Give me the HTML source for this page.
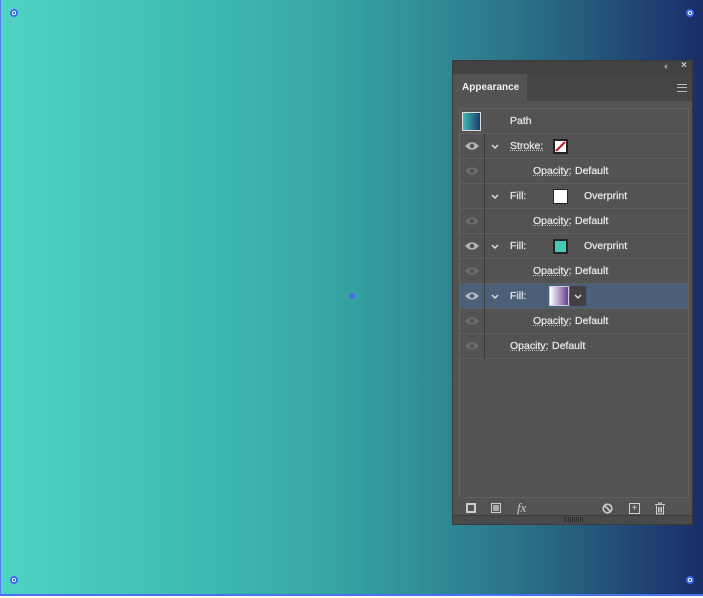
<!DOCTYPE html>
<html><head><style>
*{margin:0;padding:0;box-sizing:border-box}
body{width:703px;height:598px;overflow:hidden;background:#fff;position:relative;font-family:"Liberation Sans",sans-serif}
#bg{position:absolute;left:0;top:0;width:703px;height:596px;background:linear-gradient(90deg,#4fd3c5 0%,#40bdb4 25%,#37a8a6 45%,#32929a 58%,#2c7a8c 70%,#275e7e 82%,#1f4272 92%,#1a2d66 100%);border-left:1px solid #5a7cf0;border-bottom:2px solid #4a72e8}
.h{position:absolute;width:8px;height:8px;border-radius:50%;background:#fff;border:2px solid #3c6cf0}
.h:after{content:"";position:absolute;left:1px;top:1px;width:2px;height:2px;background:#3c6cf0}
#p{position:absolute;left:452px;top:60px;width:241px;height:465px;background:#535353;border:1px solid #3a3a3a}
#top{position:absolute;left:0;top:0;width:239px;height:13px;background:#424242}
#tabrow{position:absolute;left:0;top:13px;width:239px;height:27px;background:#454545}
#tab{position:absolute;left:0;top:0;width:74px;height:27px;background:#535353;color:#f0f0f0;font-size:10px;font-weight:bold;padding:8px 0 0 9px}
#list{position:absolute;left:6px;top:47px;width:230px;height:390px;border:1px solid #606060}
.r{position:absolute;left:0;width:228px;height:25px;border-bottom:1px solid #5e5e5e;font-size:10.5px;color:#e6e6e6;-webkit-text-stroke:0.25px #e6e6e6}
.r span{position:absolute;top:6px}
.u{text-decoration:underline dotted #bbb}
.sep{position:absolute;left:24px;top:0;width:1px;height:25px;background:#3c3c3c}
.eye{position:absolute;left:4px;top:7px;width:16px;height:10px}
.chev{position:absolute;left:31px;top:10px}
.sw{position:absolute;width:15px;height:15px;top:5px;border:1px solid #222}
#foot{position:absolute;left:0;top:443px;width:239px;height:12px}
#bot{position:absolute;left:0;top:454px;width:239px;height:9px;background:#4a4a4a;border-top:1px solid #3a3a3a}
</style></head><body>
<div id="bg"></div>
<div class="h" style="left:10px;top:9px"></div>
<div class="h" style="left:686px;top:9px"></div>
<div class="h" style="left:10px;top:576px"></div>
<div class="h" style="left:686px;top:576px"></div>
<div style="position:absolute;left:349px;top:293px;width:6px;height:6px;background:#4a6cf0;border-radius:50%"></div>
<div id="p">
<div id="top"><span style="position:absolute;left:211px;top:0;font-size:9px;color:#bbb;letter-spacing:-2px">‹‹</span><span style="position:absolute;left:228px;top:-1px;font-size:10px;color:#ccc;font-weight:bold">×</span></div>
<div id="tabrow"><div id="tab">Appearance</div>
<div style="position:absolute;left:224px;top:10px;width:10px;height:8px;border-top:1px solid #bbb;border-bottom:1px solid #bbb"><div style="margin-top:2px;height:1px;background:#bbb"></div></div></div>
<div id="list">
<div class="r" style="top:0"><div class="sw" style="left:2px;top:3px;width:19px;height:19px;border:1px solid #ddd;background:linear-gradient(90deg,#3fbcb3,#1e3a6c)"></div><span style="left:50px">Path</span></div>
<div class="r" style="top:25px"><svg class="eye" viewBox="0 0 16 10"><path d="M1 5Q8-2.5 15 5Q8 12.5 1 5Z" fill="#b4b4b4"/><circle cx="8" cy="5" r="2.2" fill="#535353"/></svg><div class="sep"></div><svg class="chev" width="8" height="6"><path d="M1 1l3 3 3-3" stroke="#ddd" stroke-width="1.5" fill="none"/></svg><span class="u" style="left:50px">Stroke:</span><div class="sw" style="left:93px;background:#fff;border:2px solid #222"><svg width="11" height="11" style="position:absolute;left:0;top:0"><path d="M1 10L10 1" stroke="#d0102a" stroke-width="2"/></svg></div></div>
<div class="r" style="top:50px"><svg class="eye" viewBox="0 0 16 10" opacity=".35"><path d="M1 5Q8-2.5 15 5Q8 12.5 1 5Z" fill="#999"/><circle cx="8" cy="5" r="2.2" fill="#535353"/></svg><div class="sep"></div><span class="u" style="left:73px">Opacity:</span><span style="left:115px">Default</span></div>
<div class="r" style="top:75px"><div class="sep"></div><svg class="chev" width="8" height="6"><path d="M1 1l3 3 3-3" stroke="#ddd" stroke-width="1.5" fill="none"/></svg><span style="left:50px">Fill:</span><div class="sw" style="left:93px;background:#fff"></div><span style="left:124px">Overprint</span></div>
<div class="r" style="top:100px"><svg class="eye" viewBox="0 0 16 10" opacity=".35"><path d="M1 5Q8-2.5 15 5Q8 12.5 1 5Z" fill="#999"/><circle cx="8" cy="5" r="2.2" fill="#535353"/></svg><div class="sep"></div><span class="u" style="left:73px">Opacity:</span><span style="left:115px">Default</span></div>
<div class="r" style="top:125px"><svg class="eye" viewBox="0 0 16 10"><path d="M1 5Q8-2.5 15 5Q8 12.5 1 5Z" fill="#b4b4b4"/><circle cx="8" cy="5" r="2.2" fill="#535353"/></svg><div class="sep"></div><svg class="chev" width="8" height="6"><path d="M1 1l3 3 3-3" stroke="#ddd" stroke-width="1.5" fill="none"/></svg><span style="left:50px">Fill:</span><div class="sw" style="left:93px;background:#45c8b9;border:2px solid #222"></div><span style="left:124px">Overprint</span></div>
<div class="r" style="top:150px"><svg class="eye" viewBox="0 0 16 10" opacity=".35"><path d="M1 5Q8-2.5 15 5Q8 12.5 1 5Z" fill="#999"/><circle cx="8" cy="5" r="2.2" fill="#535353"/></svg><div class="sep"></div><span class="u" style="left:73px">Opacity:</span><span style="left:115px">Default</span></div>
<div class="r" style="top:175px;background:#4b5f79"><svg class="eye" viewBox="0 0 16 10"><path d="M1 5Q8-2.5 15 5Q8 12.5 1 5Z" fill="#b4b4b4"/><circle cx="8" cy="5" r="2.2" fill="#4b5f79"/></svg><div class="sep"></div><svg class="chev" width="8" height="6"><path d="M1 1l3 3 3-3" stroke="#ddd" stroke-width="1.5" fill="none"/></svg><span style="left:50px">Fill:</span><div class="sw" style="left:89px;top:2px;width:20px;height:20px;border:1px solid #ccc;background:linear-gradient(90deg,#fff,#6a3d8e)"></div><div style="position:absolute;left:110px;top:2px;width:16px;height:20px;background:#404040;border-radius:2px"><svg width="8" height="6" style="position:absolute;left:4px;top:8px"><path d="M1 1l3 3 3-3" stroke="#ddd" stroke-width="1.5" fill="none"/></svg></div></div>
<div class="r" style="top:200px"><svg class="eye" viewBox="0 0 16 10" opacity=".35"><path d="M1 5Q8-2.5 15 5Q8 12.5 1 5Z" fill="#999"/><circle cx="8" cy="5" r="2.2" fill="#535353"/></svg><div class="sep"></div><span class="u" style="left:73px">Opacity:</span><span style="left:115px">Default</span></div>
<div class="r" style="top:225px"><svg class="eye" viewBox="0 0 16 10" opacity=".35"><path d="M1 5Q8-2.5 15 5Q8 12.5 1 5Z" fill="#999"/><circle cx="8" cy="5" r="2.2" fill="#535353"/></svg><div class="sep"></div><span class="u" style="left:50px">Opacity:</span><span style="left:92px">Default</span></div>
</div>
<div id="foot">
<div style="position:absolute;left:13px;top:-1px;width:10px;height:10px;border:2px solid #ccc"></div>
<div style="position:absolute;left:38px;top:-1px;width:10px;height:10px;border:1px solid #ccc;background:#aaa;box-shadow:inset 0 0 0 1px #535353"></div>
<span style="position:absolute;left:64px;top:-4px;font-size:13px;font-style:italic;color:#ccc;font-family:'Liberation Serif',serif">fx<sub style="font-size:7px">.</sub></span>
<svg style="position:absolute;left:149px;top:-1px" width="11" height="11"><circle cx="5.5" cy="5.5" r="4.3" stroke="#ccc" stroke-width="1.6" fill="none"/><path d="M2.5 2.5l6 6" stroke="#ccc" stroke-width="1.6"/></svg>
<div style="position:absolute;left:176px;top:-1px;width:11px;height:11px;border:1px solid #ccc;color:#ccc;font-size:10px;line-height:9px;text-align:center">+</div>
<svg style="position:absolute;left:201px;top:-2px" width="12" height="13"><path d="M1 2.5h10M4.5 2.5V1h3v1.5M2.5 3.5v8.5h7V3.5M4.5 5v5.5M6 5v5.5M7.5 5v5.5" stroke="#ccc" stroke-width="1" fill="none"/></svg>
</div>
<div id="bot"><div style="position:absolute;left:111px;top:1px;width:20px;height:5px;background:repeating-linear-gradient(90deg,#2e2e2e 0 1px,transparent 1px 2px)"></div></div>
</div>
</body></html>
